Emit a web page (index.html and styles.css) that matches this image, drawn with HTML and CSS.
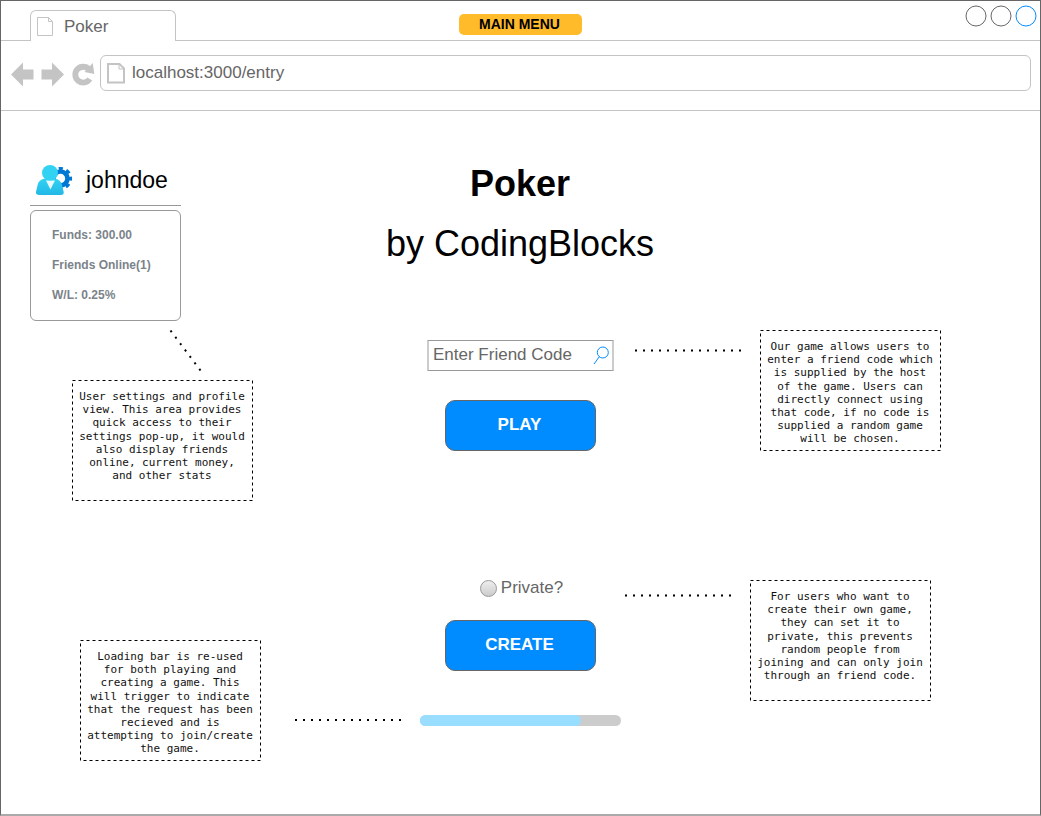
FILE: index.html
```html
<!DOCTYPE html>
<html lang="en">
<head>
<meta charset="utf-8">
<title>Poker</title>
<link rel="stylesheet" href="styles.css">
</head>
<body>
<div class="window">
  <header class="tabstrip">
    <div class="tab">
      <svg class="tab-icon" width="17" height="20" viewBox="0 0 17 20"><path d="M.5.5H11.5L15.5 4.5V18.5H.5ZM11.5.5V4.5H15.5" fill="none" stroke="#c4c4c4"/></svg>
      <span>Poker</span>
    </div>
    <div class="badge">MAIN MENU</div>
    <svg class="controls" width="72" height="22" viewBox="0 0 72 22" fill="#fff">
      <circle cx="11" cy="11" r="10" stroke="#666"/><circle cx="36" cy="11" r="10" stroke="#666"/><circle cx="61" cy="11" r="10" stroke="#008cff"/>
    </svg>
  </header>
  <nav class="toolbar">
    <svg class="nav-icons" width="84" height="26" viewBox="0 0 84 26" fill="#c4c4c4">
      <path d="M0 13.5 12 1.5V8.5H22.5V18.5H12V25.5Z"/>
      <path d="M53 13.5 41 1.5V8.5H30.5V18.5H41V25.5Z"/>
      <path d="M78.800 18A7.900 7.900 0 1 1 78 8.300" fill="none" stroke="#c4c4c4" stroke-width="5.800"/>
      <path d="M81.800 2 83.300 13 73.500 11Z"/>
    </svg>
    <div class="address">
      <svg class="address-icon" width="19" height="21" viewBox="0 0 19 21"><path d="M1 1H12.5L17 5.5V19.5H1Z" fill="none" stroke="#c4c4c4" stroke-width="2"/><path d="M12 1V6H17" fill="none" stroke="#c4c4c4"/></svg>
      <span>localhost:3000/entry</span>
    </div>
  </nav>
  <main class="page">
    <section class="side-left">
      <div class="user">
        <svg class="avatar" width="37" height="31" viewBox="0 0 37 31">
          <defs>
            <linearGradient id="body" x1="0" y1="0" x2="0" y2="1"><stop offset="0" stop-color="#32d2f2"/><stop offset="1" stop-color="#22b8e6"/></linearGradient>
          </defs>
          <g fill="none" stroke="#0078d4">
            <circle cx="24.500" cy="13.500" r="7" stroke-width="4.600"/>
            <circle cx="24.500" cy="13.500" r="10" stroke-width="3.200" stroke-dasharray="4.200 3.654" stroke-dashoffset="2.100"/>
          </g>
          <path d="M3 30C.8 30-.2 28.700 0 27L1.600 20Q3 14.500 8 13.800H19.500Q24.500 14.500 26 20L27.700 27Q28 30 25 30Z" fill="url(#body)"/>
          <path d="M10 15.500H19L14.400 24.500Z" fill="#e9faff"/>
          <ellipse cx="14" cy="7.800" rx="8" ry="7.800" fill="#32d2f2"/>
        </svg>
        <span>johndoe</span>
      </div>
      <div class="stats">
        <p>Funds: 300.00</p>
        <p>Friends Online(1)</p>
        <p>W/L: 0.25%</p>
      </div>
      <div class="note note-profile">
        <svg class="note-frame" width="181" height="121"><path d="M.5.5H180.500V120.500H.5Z"/></svg>
        User settings and profile<br>view. This area provides<br>quick access to their<br>settings pop-up, it would<br>also display friends<br>online, current money,<br>and other stats
      </div>
      <div class="note note-loading">
        <svg class="note-frame" width="181" height="121"><path d="M.5.5H180.500V120.500H.5Z"/></svg>
        Loading bar is re-used<br>for both playing and<br>creating a game. This<br>will trigger to indicate<br>that the request has been<br>recieved and is<br>attempting to join/create<br>the game.
      </div>
    </section>
    <section class="center">
      <h1>Poker</h1>
      <p class="subtitle">by CodingBlocks</p>
      <div class="code">
        <span>Enter Friend Code</span>
        <svg width="17" height="19" viewBox="0 0 17 19" fill="none" stroke="#008cff"><circle cx="9.800" cy="7.500" r="5.500"/><path d="M6.300 11.700 1 19"/></svg>
      </div>
      <div class="button">PLAY</div>
      <div class="private"><i class="radio"></i><span>Private?</span></div>
      <div class="button button-create">CREATE</div>
      <div class="progress"><div class="progress-fill"></div></div>
    </section>
    <section class="side-right">
      <div class="note note-code">
        <svg class="note-frame" width="181" height="121"><path d="M.5.5H180.500V120.500H.5Z"/></svg>
        Our game allows users to<br>enter a friend code which<br>is supplied by the host<br>of the game. Users can<br>directly connect using<br>that code, if no code is<br>supplied a random game<br>will be chosen.
      </div>
      <div class="note note-create">
        <svg class="note-frame" width="181" height="121"><path d="M.5.5H180.500V120.500H.5Z"/></svg>
        For users who want to<br>create their own game,<br>they can set it to<br>private, this prevents<br>random people from<br>joining and can only join<br>through an friend code.
      </div>
    </section>
  </main>
  <svg class="connectors" width="1041" height="816" viewBox="0 0 1041 816">
    <path d="M170.500 330.500 200.500 370.500M635 350.500H744M625 595.500H734M295 720H404"/>
  </svg>
</div>
</body>
</html>
```
FILE: styles.css
```css
* { box-sizing: border-box; }
body { margin: 0; background: #fff; font-family: "Liberation Sans", Arial, sans-serif; }
h1, p { margin: 0; }
svg { display: block; flex: none; }

.window {
  position: relative;
  width: 1041px;
  height: 816px;
  border: 1px solid #666;
  border-bottom: 2px solid #aaa;
  overflow: hidden;
}

.tabstrip {
  display: grid;
  grid-template-columns: 1fr 123px 1fr;
  height: 40px;
  border-bottom: 1px solid #c4c4c4;
}
.tab {
  display: flex;
  width: 146px;
  height: 31px;
  margin: 9px 0 0 29px;
  padding: 6px 0 0 6px;
  gap: 10px;
  border: 1px solid #c4c4c4;
  border-bottom: 0;
  border-radius: 6px 6px 0 0;
  background: #fff;
  color: #666;
  font-size: 17px;
  line-height: 19px;
}
.badge {
  height: 21px;
  margin-top: 13px;
  padding-right: 2px;
  border-radius: 5px;
  background: #ffbb29;
  font-size: 14px;
  font-weight: bold;
  line-height: 21px;
  text-align: center;
}
.controls { justify-self: end; margin: 3.5px 3.5px 0 0; }

.toolbar {
  display: flex;
  height: 70px;
  padding: 14px 9px 0 10px;
  gap: 5px;
  border-bottom: 1px solid #c4c4c4;
}
.nav-icons { margin-top: 6px; }
.address {
  display: flex;
  flex: 1;
  height: 36px;
  padding: 7px 0 0 6px;
  gap: 6px;
  border: 1px solid #c4c4c4;
  border-radius: 6px;
  color: #666;
  font-size: 17px;
  line-height: 20px;
}

.page {
  display: grid;
  grid-template-columns: 300px 1fr 300px;
}

.user {
  display: flex;
  width: 151px;
  height: 43px;
  margin: 52px 0 4px 29px;
  padding: 2px 0 0 6px;
  gap: 13px;
  border-bottom: 1px solid #999;
  font-size: 23px;
  line-height: 30px;
}
.stats {
  width: 151px;
  height: 111px;
  margin-left: 29px;
  padding: 9px 0 0 21px;
  border: 1px solid #999;
  border-radius: 6px;
  color: #7b838a;
  font-size: 12px;
  font-weight: bold;
  line-height: 30px;
}

.note {
  position: relative;
  width: 181px;
  height: 121px;
  padding: 10px 1px 0 0;
  color: #111;
  font: 11px/13.2px "DejaVu Sans Mono", monospace;
  text-align: center;
  white-space: nowrap;
}
.note-frame { position: absolute; inset: 0; fill: none; stroke: #000; stroke-dasharray: 3 3; }
.note-profile { margin: 59px 0 0 71px; }
.note-loading { margin: 139px 0 0 79px; }
.note-code { margin: 219px 0 0 20px; }
.note-create { margin: 129px 0 0 10px; }

.center {
  display: flex;
  flex-direction: column;
  align-items: center;
}
h1 { margin-top: 52px; padding-right: 1px; font-size: 36px; line-height: 42px; }
.subtitle { margin-top: 18px; padding-right: 1px; font-size: 36px; line-height: 42px; }
.code {
  display: flex;
  justify-content: space-between;
  width: 187px;
  height: 31px;
  margin-top: 75px;
  padding: 4px 2px 0 4px;
  border: 1px solid #999;
  border-width: 1px 2px;
  border-color: #999 #ccc;
  color: #666;
  font-size: 17px;
  line-height: 20px;
}
.button {
  width: 151px;
  height: 51px;
  margin-top: 29px;
  padding-right: 2px;
  border: 1px solid #666;
  border-radius: 10px;
  background: #008cff;
  color: #fff;
  font-size: 17px;
  font-weight: bold;
  line-height: 48px;
  text-align: center;
}
.private {
  display: flex;
  height: 20px;
  margin: 127px 0 0 2px;
  gap: 4px;
  color: #666;
  font-size: 17px;
  line-height: 20px;
}
.radio {
  width: 17px;
  height: 17px;
  margin-top: 1.5px;
  border: 1px solid #999;
  border-radius: 50%;
  background: linear-gradient(#eee, #ccc);
}
.button-create { margin-top: 22px; }
.progress {
  width: 201px;
  height: 11px;
  margin-top: 44px;
  border-radius: 6px;
  background: #ccc;
}
.progress-fill { width: 161px; height: 11px; border-radius: 6px; background: #99ddff; }

.connectors {
  position: absolute;
  top: -1px;
  left: -1px;
  fill: none;
  stroke: #000;
  stroke-width: 2;
  stroke-dasharray: 2 6;
  pointer-events: none;
}
```
